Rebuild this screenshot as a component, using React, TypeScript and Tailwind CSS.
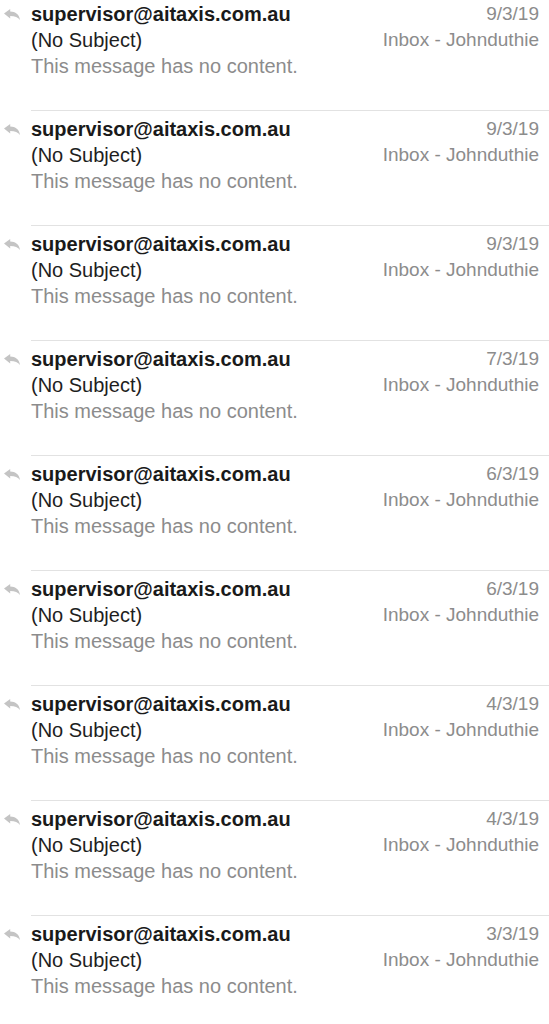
import { Fragment } from 'react';

const messages = [
  { date: '9/3/19' },
  { date: '9/3/19' },
  { date: '9/3/19' },
  { date: '7/3/19' },
  { date: '6/3/19' },
  { date: '6/3/19' },
  { date: '4/3/19' },
  { date: '4/3/19' },
  { date: '3/3/19' },
];

function ReplyIcon() {
  return (
    <svg width="16" height="11" viewBox="0 0 16 11" className="block">
      <path
        d="M0 4.6 L6.2 0 L6.2 2.6 C11.5 2.6 15.2 5.6 16 11 C14 8.2 11 7 6.2 7 L6.2 9.4 Z"
        fill="#c4c4c4"
      />
    </svg>
  );
}

export default function App() {
  return (
    <div
      className="w-full min-h-screen bg-white pt-[1px]"
      style={{ fontFamily: '"Liberation Sans", Arial, sans-serif' }}
    >
      {messages.map((m, i) => (
        <Fragment key={i}>
          <div className="flex pb-[31px]">
            {/* reply indicator */}
            <div className="w-[31px] shrink-0 pl-[4px] pt-[8px]">
              <ReplyIcon />
            </div>
            <div className="flex-1 flex justify-between pr-[10px]">
              <div className="text-[20px] leading-[26px]">
                <p className="font-bold text-[#1a1a1a]">supervisor@aitaxis.com.au</p>
                <p className="text-[#1e1e1e]">(No Subject)</p>
                <p className="text-[#8c8c8c]">This message has no content.</p>
              </div>
              <div className="text-right text-[19px] leading-[26px] text-[#8c8c8c]">
                <p>{m.date}</p>
                <p>Inbox - Johnduthie</p>
              </div>
            </div>
          </div>
          <div className="ml-[31px] mb-[5px] h-px bg-[#e2e2e2]" />
        </Fragment>
      ))}
    </div>
  );
}
